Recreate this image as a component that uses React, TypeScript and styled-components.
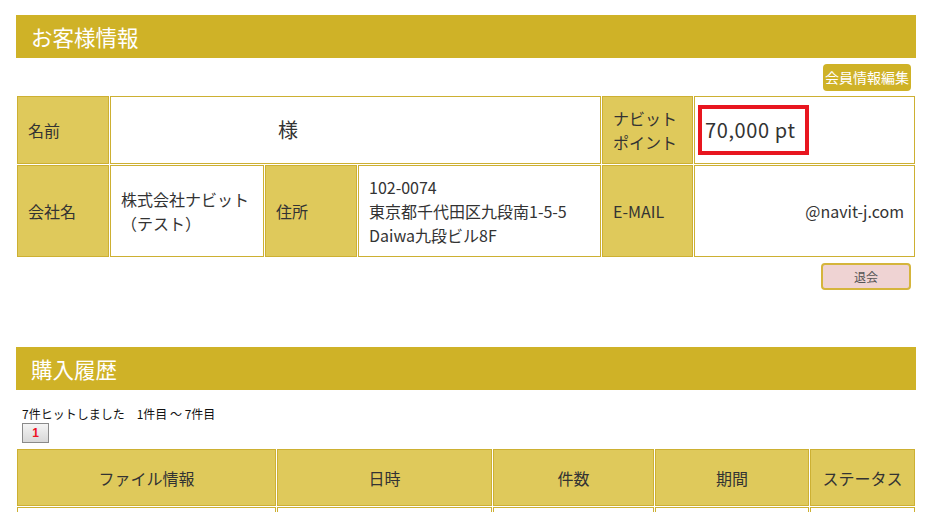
import * as React from 'react';
import styled, { createGlobalStyle } from 'styled-components';

const gold = '#cfb227';
const goldLight = '#dfc95b';
const goldBorder = '#cdb032';
const text = '#333333';

const GlobalStyle = createGlobalStyle`
    html, body {
        margin: 0;
        padding: 0;
        background: #ffffff;
    }
    body {
        font-family: "Noto Sans CJK JP", "Noto Sans", sans-serif;
        color: ${text};
    }
`;

const Page = styled.div`
    width: 900px;
    padding: 15px 0 0 16px;
`;

const Section = styled.section<{ gapTop?: number }>`
    margin-top: ${({ gapTop }) => gapTop || 0}px;
`;

const SectionTitle = styled.h2`
    margin: 0;
    height: 43px;
    display: flex;
    align-items: center;
    padding-left: 15px;
    background: ${gold};
    color: #ffffff;
    font-size: 21.5px;
    font-weight: normal;
`;

const ActionRow = styled.div<{ top: number; bottom: number }>`
    display: flex;
    justify-content: flex-end;
    padding: ${({ top, bottom }) => `${top}px 5px ${bottom}px 0`};
`;

const EditButton = styled.button`
    height: 27px;
    padding: 0 2px;
    border: none;
    border-radius: 4px;
    background: ${gold};
    color: #ffffff;
    font-family: inherit;
    font-size: 14px;
    line-height: 27px;
`;

const LeaveButton = styled.button`
    width: 90px;
    height: 27px;
    border: 2px solid #d5b53c;
    border-radius: 4px;
    background: #efd3d3;
    color: #555555;
    font-family: inherit;
    font-size: 12px;
`;

const Table = styled.table`
    width: 900px;
    table-layout: fixed;
    border-collapse: separate;
    border-spacing: 1px;
    font-size: 16px;
    line-height: 24px;
`;

const Th = styled.th<{ center?: boolean }>`
    background: ${goldLight};
    border: 1px solid ${goldBorder};
    padding: 9px 10px;
    font-weight: normal;
    text-align: ${({ center }) => (center ? 'center' : 'left')};
    color: ${text};
`;

const Td = styled.td<{ align?: 'left' | 'right' | 'center' }>`
    background: #ffffff;
    border: 1px solid ${goldBorder};
    padding: 9px 10px;
    text-align: ${({ align }) => align || 'left'};
    vertical-align: middle;
`;

const PointsTd = styled(Td)`
    padding: 0 10px 0 3px;
`;

const HeadTh = styled(Th)`
    height: 37px;
    text-align: center;
`;

const Honorific = styled.span`
    display: inline-block;
    margin-left: 157px;
    font-size: 20px;
`;

const Points = styled.span`
    display: inline-block;
    padding: 9px 9px 9px 3px;
    border: 4px solid #e8161f;
    font-size: 20px;
    line-height: 24px;
    letter-spacing: 0.6px;
`;

const HitInfo = styled.div`
    margin: 16px 0 0 6px;
    font-size: 12px;
    line-height: 16px;
    color: #111111;
`;

const PagerButton = styled.button`
    display: block;
    width: 27px;
    height: 20px;
    margin: 1px 0 5px 6px;
    padding: 0;
    border: 1px solid #8a8a8a;
    background: linear-gradient(#f4f4f4, #d8d8d8);
    color: #ee1122;
    font-family: "Liberation Sans", sans-serif;
    font-weight: bold;
    font-size: 12px;
`;

export default function App() {
    return (
        <>
            <GlobalStyle />
            <Page>
                <Section>
                    <SectionTitle>お客様情報</SectionTitle>
                    <ActionRow top={6} bottom={4}>
                        <EditButton>会員情報編集</EditButton>
                    </ActionRow>
                    <Table>
                        <colgroup>
                            <col style={{ width: 92 }} />
                            <col style={{ width: 154 }} />
                            <col style={{ width: 92 }} />
                            <col style={{ width: 243 }} />
                            <col style={{ width: 91 }} />
                            <col style={{ width: 221 }} />
                        </colgroup>
                        <tbody>
                            <tr>
                                <Th>名前</Th>
                                <Td colSpan={3}>
                                    <Honorific>様</Honorific>
                                </Td>
                                <Th>ナビット<br />ポイント</Th>
                                <PointsTd>
                                    <Points>70,000 pt</Points>
                                </PointsTd>
                            </tr>
                            <tr>
                                <Th>会社名</Th>
                                <Td>株式会社ナビット<br />（テスト）</Td>
                                <Th>住所</Th>
                                <Td>102-0074<br />東京都千代田区九段南1-5-5<br />Daiwa九段ビル8F</Td>
                                <Th>E-MAIL</Th>
                                <Td align="right">@navit-j.com</Td>
                            </tr>
                        </tbody>
                    </Table>
                    <ActionRow top={5} bottom={0}>
                        <LeaveButton>退会</LeaveButton>
                    </ActionRow>
                </Section>
                <Section gapTop={57}>
                    <SectionTitle>購入履歴</SectionTitle>
                    <HitInfo>7件ヒットしました　1件目 ～ 7件目</HitInfo>
                    <PagerButton>1</PagerButton>
                    <Table>
                        <colgroup>
                            <col style={{ width: 259 }} />
                            <col style={{ width: 215 }} />
                            <col style={{ width: 161 }} />
                            <col style={{ width: 154 }} />
                            <col style={{ width: 105 }} />
                        </colgroup>
                        <thead>
                            <tr>
                                <HeadTh>ファイル情報</HeadTh>
                                <HeadTh>日時</HeadTh>
                                <HeadTh>件数</HeadTh>
                                <HeadTh>期間</HeadTh>
                                <HeadTh>ステータス</HeadTh>
                            </tr>
                        </thead>
                        <tbody>
                            <tr>
                                <Td>&nbsp;</Td>
                                <Td>&nbsp;</Td>
                                <Td>&nbsp;</Td>
                                <Td>&nbsp;</Td>
                                <Td>&nbsp;</Td>
                            </tr>
                        </tbody>
                    </Table>
                </Section>
            </Page>
        </>
    );
}
